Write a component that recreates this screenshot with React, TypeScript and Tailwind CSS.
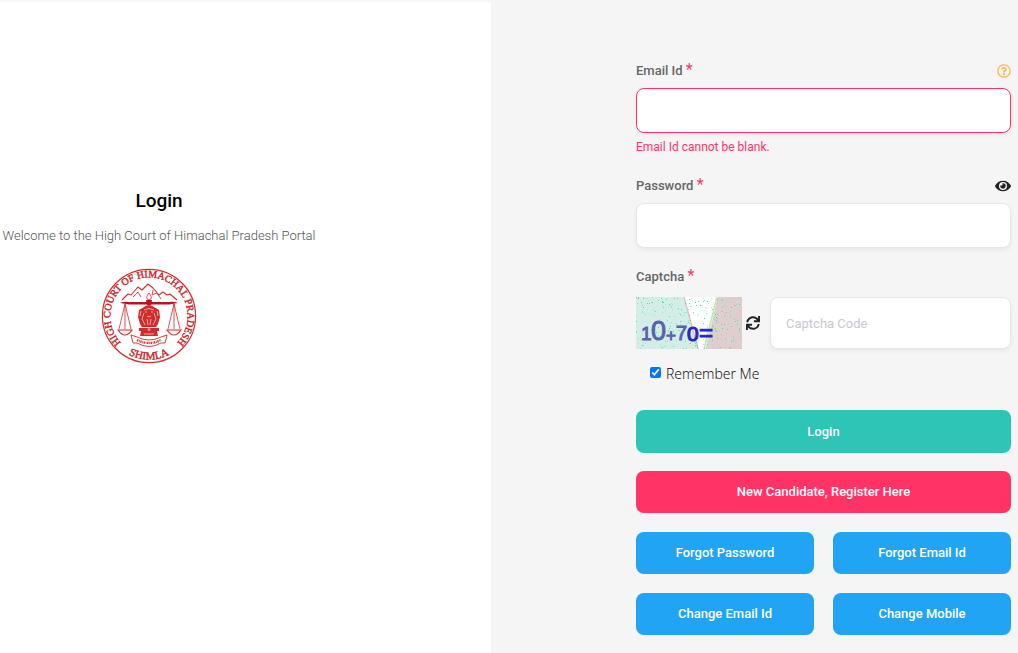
import React, { useId } from "react";
import { FaEye, FaRegQuestionCircle, FaSync } from "react-icons/fa";

function Scale({ x }: { x: number }) {
  return (
    <g fill="none" stroke="#d42a2a">
      <path d={`M${x} 36 L${x - 6} 61 M${x} 36 L${x + 6} 61 M${x} 36 V61`} strokeWidth="0.8" />
      <path d={`M${x - 7} 62 H${x + 7} Q${x} 72 ${x - 7} 62Z`} fill="#fff" strokeWidth="1.2" />
    </g>
  );
}

function Emblem() {
  return (
    <svg viewBox="0 0 96 96" className="h-24 w-24" role="img" aria-label="High Court of Himachal Pradesh, Shimla">
      <defs>
        <path id="seal-top" d="M22.2 76.7 A38.6 38.6 0 1 1 73.8 76.7" />
        <path id="seal-bottom" d="M15 77 A44.5 44.5 0 0 0 81 77" />
      </defs>
      <circle cx="48" cy="48" r="46.6" fill="#fff" stroke="#d42a2a" strokeWidth="1.2" />
      <g fill="#c91f24" stroke="#c91f24" strokeWidth="0.4" fontFamily="'Liberation Serif', serif">
        <text fontSize="10">
          <textPath href="#seal-top" startOffset="50%" textAnchor="middle">HIGH COURT OF HIMACHAL PRADESH</textPath>
        </text>
        <text fontSize="11">
          <textPath href="#seal-bottom" startOffset="50%" textAnchor="middle">SHIMLA</textPath>
        </text>
      </g>
      <g fill="none" stroke="#d42a2a" strokeWidth="1.1" strokeLinejoin="round">
        <path d="M21 32 L27 26 L30 27 L37 19 L41 22 L47 16 L52 20 L58 27 L62 24 L66 27 L69 26 L76 32" />
        <path d="M32 29 L37 24 L40 29 M52 22 L51 27 L56 25 L60 31" strokeWidth="0.8" />
      </g>
      <path d="M48 25 C45 29 45 31 48 32 C51 31 51 29 48 25Z" fill="#fff" stroke="#d42a2a" strokeWidth="0.9" />
      <path d="M19 35 Q23 33 28 34 H68 Q73 33 77 35 L68 36.5 H28Z" fill="#b3161b" />
      <path d="M45 32 H51 L50 37 H46Z" fill="#b3161b" />
      <Scale x={24} />
      <Scale x={73} />
      <g fill="#d42a2a">
        <path d="M43 39 Q48 35 53 39 L58 42 L59 49 L57 56 L55 59 H41 L39 56 L37 49 L38 42Z" />
        <path d="M38 60 H58 V63 H38Z M40 63 H56 L57 68 H39Z" />
      </g>
      <g fill="none" stroke="#fff" strokeWidth="0.6">
        <path d="M43 42 Q48 39 53 42 M44 44 H46 M50 44 H52 M46 48 Q48 50 50 48 M43 45 L41 51 L44 57 M53 45 L55 51 L52 57 M46 51 L47 57 M50 51 L49 57 M40 43 L39 48 M56 43 L57 48" />
        <circle cx="48" cy="61.5" r="1" />
        <path d="M43 66 H53" />
      </g>
      <path d="M30 67 L36 69 Q48 75 60 69 L66 67 L64 75 L60 75 Q48 82 36 75 L32 75Z" fill="#fff" stroke="#d42a2a" strokeWidth="0.9" />
      <path d="M36 72 Q48 78 60 72" fill="none" stroke="#d42a2a" strokeWidth="2.4" strokeDasharray="1.4 0.8 0.7 0.6" />
    </svg>
  );
}

const speckles = Array.from({ length: 330 }, (_, i) => ({
  x: (i * 67 + ((i * i) % 41) * 3) % 106,
  y: (i * 29 + ((i * i) % 23) * 5) % 52,
}));

function CaptchaImage() {
  return (
    <svg viewBox="0 0 106 52" className="h-13 w-[106px] shrink-0" role="img" aria-label="10+70=">
      <rect width="106" height="52" fill="#d5ede7" />
      <path d="M48 0 H82 L69 52 H62Z" fill="#fff" />
      <path d="M82 0 H106 V52 H70Z" fill="#e0cece" />
      <path d="M48 0 L62 52" stroke="#e5bcd0" strokeWidth="1.4" />
      <path d="M81 0 L68 52" stroke="#b9e9aa" strokeWidth="1.4" />
      {speckles.map((dot, i) => (
        <rect key={i} x={dot.x} y={dot.y} width="1" height="1" fill="#3ce59b" opacity={i % 3 ? 0.4 : 0.9} />
      ))}
      <g fontFamily="'Liberation Sans', sans-serif">
        <g fill="#5761ad" stroke="#5761ad" strokeWidth="0.9">
          <text x="5" y="43" fontSize="19">1</text>
          <text x="15" y="43" fontSize="27">0</text>
          <text x="30" y="44" fontSize="17">+</text>
          <text x="40" y="43" fontSize="20">7</text>
        </g>
        <g fill="#2525c8" stroke="#2525c8" strokeWidth="1.2">
          <text x="51" y="44" fontSize="21">0</text>
          <text x="63" y="44" fontSize="24">=</text>
        </g>
      </g>
    </svg>
  );
}

function FieldLabel({ htmlFor, children }: { htmlFor: string; children: string }) {
  return (
    <label htmlFor={htmlFor} className="text-[13px] leading-5 font-medium text-[#666]">
      {children} <span className="align-top text-base leading-[18px] font-normal text-[#ff3366]">*</span>
    </label>
  );
}

const inputStyle =
  "block w-full min-w-0 rounded-lg border bg-white px-[15px] text-[13px] shadow-[0_2px_4px_rgba(0,0,0,0.06)] outline-none placeholder:text-[#c8c8d0]";
const buttonStyle =
  "flex w-full items-center justify-center rounded-lg text-[13px] leading-5 font-medium text-white";

export default function App() {
  const id = useId();
  return (
    <div className="flex min-h-screen bg-[#f5f5f5] font-['Roboto',sans-serif]">
      <section className="mt-0.5 w-[48.2%] bg-white pt-44">
        <div className="flex w-[318px] flex-col items-center">
          <h1 className="text-[19px] leading-[46px] font-medium text-black">Login</h1>
          <p className="text-[13px] leading-6 font-light whitespace-nowrap text-[#555]">
            Welcome to the High Court of Himachal Pradesh Portal
          </p>
          <div className="mt-5 mr-5">
            <Emblem />
          </div>
        </div>
      </section>

      <form noValidate className="ml-auto w-[382px] pt-[61px] pr-[7px] pb-[18px]">
        <div className="flex h-5 items-center justify-between">
          <FieldLabel htmlFor={`${id}-email`}>Email Id</FieldLabel>
          <button type="button" aria-label="Help">
            <FaRegQuestionCircle className="size-3.5 text-[#ffb74d]" />
          </button>
        </div>
        <input id={`${id}-email`} type="email" aria-invalid="true" className={`${inputStyle} mt-[7px] h-[45px] border-[#ff3366]`} />
        <p className="mt-1 text-xs leading-5 text-[#ff3366]">Email Id cannot be blank.</p>

        <div className="mt-[19px] flex h-5 items-center justify-between">
          <FieldLabel htmlFor={`${id}-password`}>Password</FieldLabel>
          <button type="button" aria-label="Show password">
            <FaEye className="size-4 text-[#212529]" />
          </button>
        </div>
        <input id={`${id}-password`} type="password" className={`${inputStyle} mt-[7px] h-[45px] border-[#e8e8e8]`} />

        <div className="mt-[19px] flex h-5 items-center">
          <FieldLabel htmlFor={`${id}-captcha`}>Captcha</FieldLabel>
        </div>
        <div className="mt-[10px] flex items-center">
          <CaptchaImage />
          <button type="button" aria-label="Refresh captcha" className="mr-[10px] ml-1">
            <FaSync className="size-3.5 text-[#212529]" />
          </button>
          <input
            id={`${id}-captcha`}
            type="text"
            placeholder="Captcha Code"
            className={`${inputStyle} h-13 border-[#e8e8e8]`}
          />
        </div>

        <label className="mt-[15px] ml-[14px] flex items-start gap-[5px] font-['Open_Sans',sans-serif] text-sm leading-5 font-light text-black">
          <input type="checkbox" defaultChecked className="mt-[3px] size-[11px] accent-[#0075ff]" />
          Remember Me
        </label>

        <button type="submit" className={`${buttonStyle} mt-[26px] h-[43px] bg-[#2ec4b6]`}>Login</button>
        <a href="#register" className={`${buttonStyle} mt-[18px] h-[42px] bg-[#ff3366]`}>New Candidate, Register Here</a>
        <div className="mt-[19px] grid grid-cols-2 gap-[19px]">
          <a href="#forgot-password" className={`${buttonStyle} h-[42px] bg-[#20a4f3]`}>Forgot Password</a>
          <a href="#forgot-email" className={`${buttonStyle} h-[42px] bg-[#20a4f3]`}>Forgot Email Id</a>
          <a href="#change-email" className={`${buttonStyle} h-[42px] bg-[#20a4f3]`}>Change Email Id</a>
          <a href="#change-mobile" className={`${buttonStyle} h-[42px] bg-[#20a4f3]`}>Change Mobile</a>
        </div>
      </form>
    </div>
  );
}
